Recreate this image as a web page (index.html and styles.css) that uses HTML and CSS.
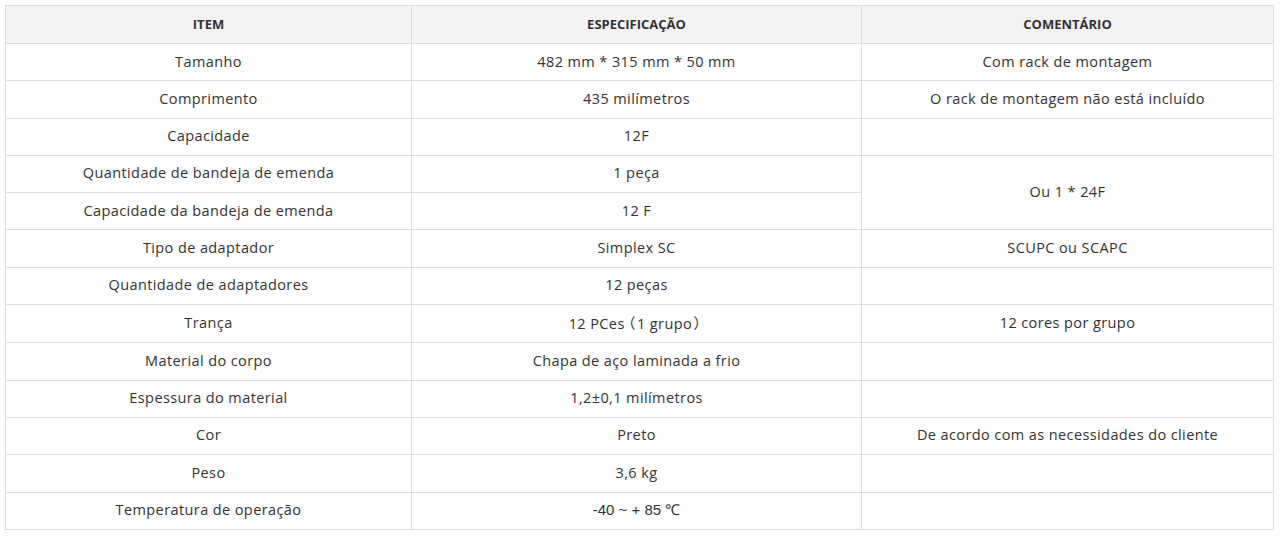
FILE: index.html
```html
<!DOCTYPE html>
<html lang="pt">
<head>
<meta charset="utf-8">
<title>Especificação</title>
<link rel="stylesheet" href="styles.css">
</head>
<body>
<table class="spec">
  <colgroup>
    <col class="c1">
    <col class="c2">
    <col class="c3">
  </colgroup>
  <thead>
    <tr><th>ITEM</th><th>ESPECIFICAÇÃO</th><th>COMENTÁRIO</th></tr>
  </thead>
  <tbody>
    <tr><td>Tamanho</td><td>482 mm * 315 mm * 50 mm</td><td>Com rack de montagem</td></tr>
    <tr><td>Comprimento</td><td>435 milímetros</td><td>O rack de montagem não está incluído</td></tr>
    <tr><td>Capacidade</td><td>12F</td><td></td></tr>
    <tr><td>Quantidade de bandeja de emenda</td><td>1 peça</td><td rowspan="2">Ou 1 * 24F</td></tr>
    <tr><td>Capacidade da bandeja de emenda</td><td>12 F</td></tr>
    <tr><td>Tipo de adaptador</td><td>Simplex SC</td><td>SCUPC ou SCAPC</td></tr>
    <tr><td>Quantidade de adaptadores</td><td>12 peças</td><td></td></tr>
    <tr><td>Trança</td><td>12 PCes<span class="fw fw-open">（</span>1 grupo<span class="fw fw-close">）</span></td><td>12 cores por grupo</td></tr>
    <tr><td>Material do corpo</td><td>Chapa de aço laminada a frio</td><td></td></tr>
    <tr><td>Espessura do material</td><td>1,2±0,1 milímetros</td><td></td></tr>
    <tr><td>Cor</td><td>Preto</td><td>De acordo com as necessidades do cliente</td></tr>
    <tr><td>Peso</td><td>3,6 kg</td><td></td></tr>
    <tr><td>Temperatura de operação</td><td class="alt">-40 ~ + 85 ℃</td><td></td></tr>
  </tbody>
</table>
</body>
</html>
```

FILE: styles.css
```css
html, body {
  margin: 0;
  background: #ffffff;
}
body {
  padding: 5px;
  font-family: "Open Sans", "Liberation Sans", sans-serif;
  font-size: 14px;
  color: #333333;
}
.spec {
  border-collapse: collapse;
  width: 1268px;
  table-layout: fixed;
}
.c1 { width: 406px; }
.c2 { width: 450px; }
.c3 { width: 412px; }
.spec th,
.spec td {
  border: 1px solid #dddddd;
  text-align: center;
  vertical-align: middle;
  padding: 8px 8px;
}
.spec th {
  background: #f3f3f3;
  font-weight: 700;
  font-size: 13px;
  color: #333333;
  line-height: 21px;
}
.spec td {
  font-size: 14.5px;
  letter-spacing: 0.4px;
  line-height: 20.3px;
  padding-top: 7.5px;
  padding-bottom: 8.5px;
}
.fw {
  font-family: "Noto Sans CJK SC", sans-serif;
  font-feature-settings: "palt" 1;
  letter-spacing: 0;
}
.fw-open { padding-left: 3px; padding-right: 2px; }
.fw-close { padding-left: 2px; padding-right: 3px; }
.spec td.alt {
  font-family: "Liberation Sans", Arial, sans-serif;
  font-size: 15px;
  letter-spacing: 0;
}
```
